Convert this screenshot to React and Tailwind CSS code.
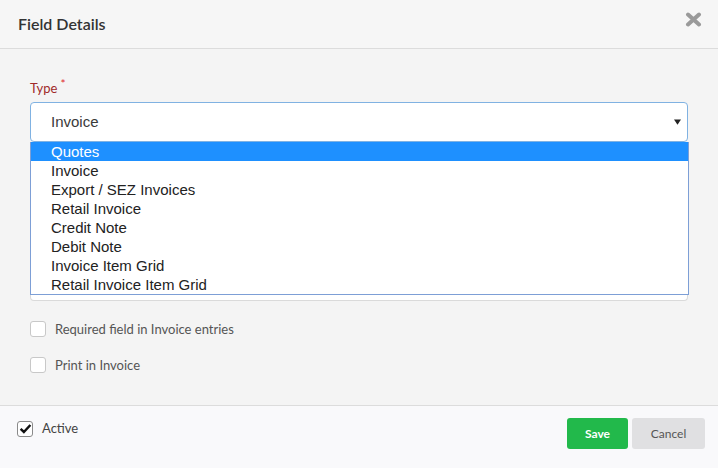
import { useState } from 'react';

const options = [
  'Quotes',
  'Invoice',
  'Export / SEZ Invoices',
  'Retail Invoice',
  'Credit Note',
  'Debit Note',
  'Invoice Item Grid',
  'Retail Invoice Item Grid',
];

function Box({ checked }) {
  return (
    <span
      className={`flex h-4 w-4 shrink-0 items-center justify-center rounded-[3px] border bg-white ${
        checked ? 'border-[#8a8a8a]' : 'border-[#c8c8c8]'
      }`}
    >
      {checked && (
        <svg viewBox="0 0 16 16" className="h-[13px] w-[13px]">
          <path d="M2 8.5l4 3.8 8-8.6" fill="none" stroke="#111" strokeWidth="3" />
        </svg>
      )}
    </span>
  );
}

export default function App() {
  const [active, setActive] = useState(true);

  return (
    <div className="flex h-[468px] w-[718px] flex-col overflow-hidden bg-[#f4f4f4] font-['Lato',sans-serif]">
      {/* header */}
      <div className="flex h-[49px] shrink-0 items-center justify-between border-b border-[#dcdcdc] bg-[#f6f6f6] pl-[18px] pr-4">
        <h1 className="text-[16px] font-semibold text-[#333]">Field Details</h1>
        <svg viewBox="0 0 17 15" className="-mt-[9px] h-[15px] w-[17px]">
          <path d="M3 2.5l11 10M14 2.5L3 12.5" stroke="#9a9a9a" strokeWidth="4" strokeLinecap="round" />
        </svg>
      </div>

      {/* body */}
      <div className="flex flex-1 flex-col px-[30px] pt-[31px]">
        <label className="flex text-[13px] leading-4 text-[#a02a2a]">
          Type<span className="ml-[3px] -mt-[4px] text-[12px] text-[#e02b2b]">*</span>
        </label>
        <div className="relative mt-[6px]">
          <div className="flex h-[40px] items-center justify-between rounded-[4px] border border-[#80b2e2] bg-white pl-5 pr-[6px] font-['Liberation_Sans',Arial,sans-serif] text-[15px] text-[#3a3a3a]">
            <span>Invoice</span>
            <svg viewBox="0 0 8 6" className="h-[6px] w-[7px]">
              <path d="M0 0h8L4 6z" fill="#222" />
            </svg>
          </div>
          <div className="absolute left-0 right-0 top-[40px] h-[159px] rounded-b-[4px] border border-t-0 border-[#dadada] bg-white" />
          <ul className="absolute left-0 right-[-1px] top-[40px] border border-t-0 border-[#7d9fd6] bg-white font-['Liberation_Sans',Arial,sans-serif] text-[15px] leading-[19px] text-[#222]">
            {options.map((o, i) => (
              <li key={o} className={`pl-5 ${i === 0 ? 'bg-[#1e90ff] text-white' : ''}`}>
                {o}
              </li>
            ))}
          </ul>
        </div>

        <div className="mt-[177px] flex flex-col gap-4 text-[13px] leading-5 text-[#555]">
          <label className="flex items-center gap-[9px]">
            <Box />
            <span>Required field in Invoice entries</span>
          </label>
          <label className="flex items-center gap-[9px]">
            <Box />
            <span>Print in Invoice</span>
          </label>
        </div>
      </div>

      {/* footer */}
      <div className="flex h-[63px] shrink-0 items-start justify-between border-t border-[#dcdcdc] bg-[#f9f9fb] pl-[17px] pr-[13px] pt-[12px]">
        <label className="mt-[1px] flex items-center gap-[9px] text-[13px] text-[#444]" onClick={() => setActive(!active)}>
          <Box checked={active} />
          <span>Active</span>
        </label>
        <div className="flex gap-1">
          <button className="h-[31px] w-[61px] rounded-[3px] bg-[#22b94b] text-[12px] font-bold text-white">Save</button>
          <button className="h-[31px] w-[73px] rounded-[3px] bg-[#e0e0e2] text-[12px] text-[#555]">Cancel</button>
        </div>
      </div>
    </div>
  );
}
